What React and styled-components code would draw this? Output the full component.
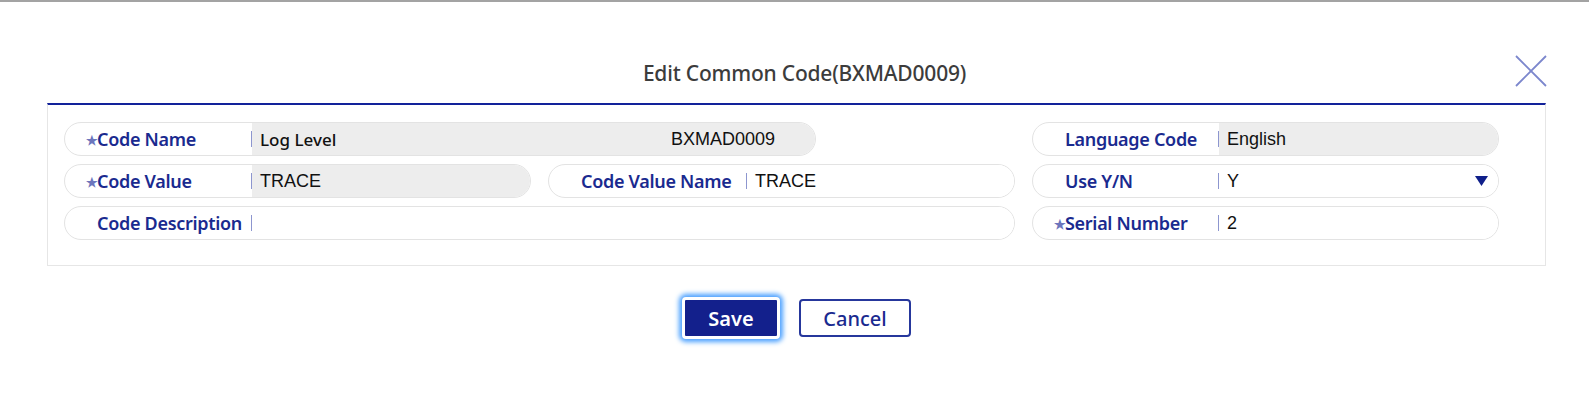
import React from "react"
import styled, { createGlobalStyle } from "styled-components"

const GlobalStyle = createGlobalStyle`
  html, body {
    margin: 0;
    padding: 0;
    background: #ffffff;
  }
  body {
    font-family: "Noto Sans", "Liberation Sans", sans-serif;
  }
`

const Page = styled.div`
  width: 1589px;
  height: 413px;
  box-sizing: border-box;
  border-top: 2px solid #a3a3a3;
  background: #ffffff;
`

const Dialog = styled.div`
  margin: 0 43px 0 47px;
`

const Header = styled.div`
  display: grid;
  grid-template-columns: 1fr auto 1fr;
  align-items: end;
  height: 101px;
  box-sizing: border-box;
  padding-bottom: 16px;
`

const Title = styled.h2`
  grid-column: 2;
  margin: 0;
  padding-left: 16px;
  font-family: "Noto Sans", sans-serif;
  font-size: 21px;
  font-weight: 500;
  line-height: 28px;
  color: #3c3c3c;
  letter-spacing: -0.2px;
`

const CloseButton = styled.button`
  grid-column: 3;
  justify-self: end;
  width: 32px;
  height: 32px;
  padding: 0;
  margin-right: -1px;
  border: none;
  background: transparent;
  cursor: pointer;
  display: flex;
`

const Panel = styled.div`
  border: 1px solid #e6e6e6;
  border-top: 2px solid #12229a;
  padding: 17px 46px 25px 16px;
`

const Grid = styled.div`
  display: grid;
  grid-template-columns: repeat(3, 467px);
  column-gap: 17px;
  row-gap: 8px;
`

const Field = styled.div`
  grid-column: ${p => p.$span || "auto"};
  width: ${p => (p.$width ? `${p.$width}px` : "auto")};
  height: 34px;
  box-sizing: border-box;
  display: flex;
  align-items: stretch;
  border: 1.5px solid #e3e3e3;
  border-radius: 17px;
  overflow: hidden;
  background: #ffffff;
`

const Label = styled.div`
  flex: none;
  width: ${p => p.$width}px;
  box-sizing: border-box;
  padding-left: 32px;
  display: flex;
  align-items: center;
  font-family: "Noto Sans", sans-serif;
  font-size: 18px;
  font-weight: 600;
  color: #1a2a8f;
  letter-spacing: -0.3px;
  white-space: nowrap;
`

const Star = styled.span`
  width: 11px;
  margin-left: -11px;
  font-size: 13px;
  color: #6c76bd;
  line-height: 1;
  padding-top: 3px;
`

const Divider = styled.span`
  margin-left: auto;
  width: 1.5px;
  height: 16px;
  background: #8d96cf;
`

const Value = styled.div`
  flex: 1;
  display: flex;
  align-items: center;
  justify-content: space-between;
  padding: 0 10px 0 8px;
  background: ${p => (p.$readOnly ? "#ededed" : "#ffffff")};
  font-family: ${p => (p.$alt ? `"Noto Sans", sans-serif` : `"Liberation Sans", Arial, sans-serif`)};
  font-size: ${p => (p.$alt ? "17px" : "18px")};
  font-weight: ${p => (p.$alt ? 500 : 400)};
  color: #111111;
`

const Code = styled.span`
  font-family: "Liberation Sans", Arial, sans-serif;
  font-size: 18px;
  padding-right: 30px;
`

const Actions = styled.div`
  display: flex;
  justify-content: center;
  gap: 19px;
  margin-top: 31px;
`

const Button = styled.button`
  box-sizing: border-box;
  font-family: "Noto Sans", sans-serif;
  font-size: 20px;
  font-weight: ${p => (p.$primary ? 600 : 500)};
  border-radius: 4px;
  cursor: pointer;
  padding: 0;
  ${p =>
    p.$primary
      ? `
    width: 98px;
    height: 42px;
    background: #13208c;
    color: #ffffff;
    border: 3px solid #ffffff;
    box-shadow: 0 0 5px 3px #4aa0ff;
  `
      : `
    width: 112px;
    height: 38px;
    margin-top: 2px;
    background: #ffffff;
    color: #1a2a8f;
    border: 2px solid #26379c;
  `}
`

const Field1 = ({ label, required, value, readOnly, alt, code, select, labelWidth = 187, span, width }) => (
  <Field $span={span} $width={width}>
    <Label $width={labelWidth}>
      {required && <Star>★</Star>}
      {label}
      <Divider />
    </Label>
    <Value $readOnly={readOnly} $alt={alt}>
      <span>{value}</span>
      {code && <Code>{code}</Code>}
      {select && (
        <svg width="13" height="10" viewBox="0 0 13 10">
          <polygon points="0,0 13,0 6.5,10" fill="#0f1f8a" />
        </svg>
      )}
    </Value>
  </Field>
)

const App = () => {
  return (
    <Page>
      <GlobalStyle />
      <Dialog>
        <Header>
          <Title>Edit Common Code(BXMAD0009)</Title>
          <CloseButton aria-label="close">
            <svg width="32" height="32" viewBox="0 0 32 32">
              <path d="M1 1 L31 31 M31 1 L1 31" stroke="#7c87cd" strokeWidth="1.8" fill="none" />
            </svg>
          </CloseButton>
        </Header>
        <Panel>
          <Grid>
            <Field1 label="Code Name" required value="Log Level" alt readOnly code="BXMAD0009" span="1 / 3" width={752} />
            <Field1 label="Language Code" value="English" readOnly labelWidth={186} />
            <Field1 label="Code Value" required value="TRACE" readOnly />
            <Field1 label="Code Value Name" value="TRACE" labelWidth={198} />
            <Field1 label="Use Y/N" value="Y" select labelWidth={186} />
            <Field1 label="Code Description" value="" span="1 / 3" />
            <Field1 label="Serial Number" required value="2" labelWidth={186} />
          </Grid>
        </Panel>
        <Actions>
          <Button $primary>Save</Button>
          <Button>Cancel</Button>
        </Actions>
      </Dialog>
    </Page>
  )
}

export default App
